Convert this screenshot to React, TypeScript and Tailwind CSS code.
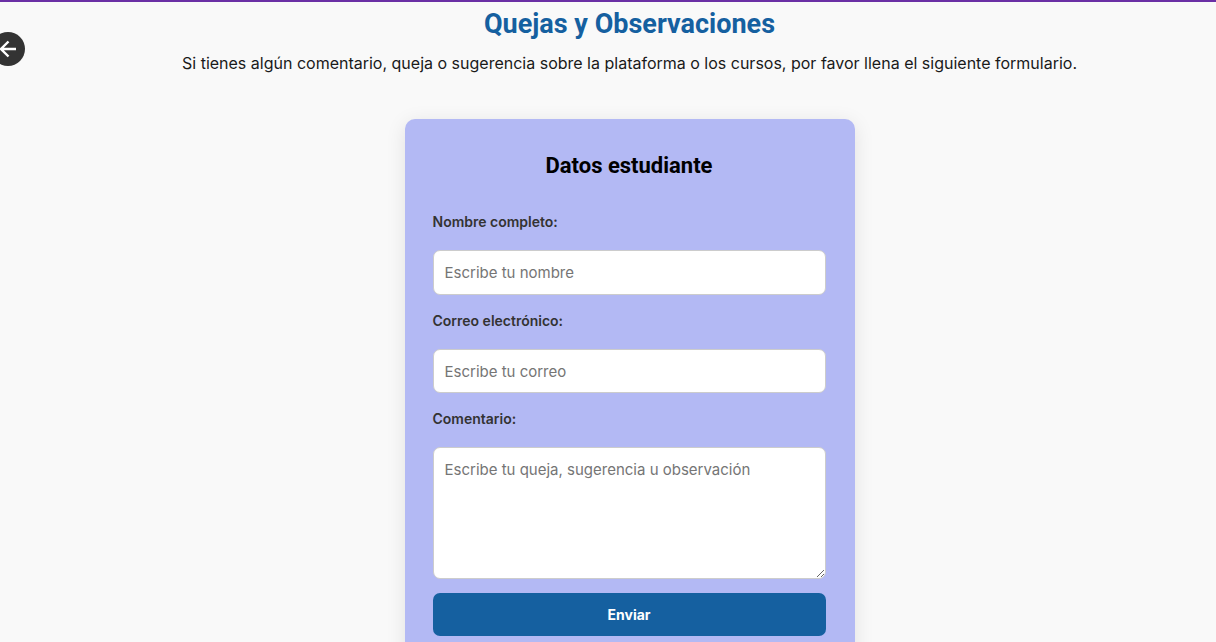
import type { ReactNode } from "react";

const fieldClass =
  "block w-full rounded-[7px] border border-[#cccccc] bg-white px-[11px] text-[15px] text-[#333333] placeholder:text-[#757575]";

function Field({ id, label, children }: { id: string; label: string; children: ReactNode }) {
  return (
    <div className="mb-[14px]">
      <label htmlFor={id} className="mb-4 block text-[14px] font-semibold leading-6 text-[#333333]">
        {label}
      </label>
      {children}
    </div>
  );
}

export default function App() {
  return (
    <div className="relative min-h-screen overflow-hidden border-t-2 border-[#6a2fa5] bg-[#f9f9f9] pl-[43px] font-['Inter',sans-serif] text-black">
      <button
        type="button"
        aria-label="Volver"
        className="absolute -left-[9px] top-[30px] flex size-[34px] items-center justify-center rounded-full bg-[#333333] text-white"
      >
        <svg viewBox="0 0 24 24" className="size-6" fill="none" stroke="currentColor" strokeWidth="2.4">
          <path d="M20 12H5M12.5 4.5L5 12l7.5 7.5" />
        </svg>
      </button>
      <header className="text-center">
        <h1 className="pt-1 font-['Roboto',sans-serif] text-[27px] font-bold leading-9 text-[#1560a0]">
          Quejas y Observaciones
        </h1>
        <p className="mt-[9px] text-[16px] leading-6 text-[#1a1a1a]">
          Si tienes algún comentario, queja o sugerencia sobre la plataforma o los cursos, por favor llena el siguiente formulario.
        </p>
      </header>
      <form className="mx-auto mt-11 w-full max-w-[450px] rounded-[10px] bg-[#b3b9f4] pb-7 pl-7 pr-[29px] pt-[29px] shadow-[0_4px_20px_rgba(0,0,0,0.1)]">
        <h2 className="mb-[26px] text-center font-['Roboto',sans-serif] text-[22px] font-bold leading-9">
          Datos estudiante
        </h2>
        <Field id="nombre" label="Nombre completo:">
          <input id="nombre" type="text" placeholder="Escribe tu nombre" className={`${fieldClass} h-[45px]`} />
        </Field>
        <Field id="correo" label="Correo electrónico:">
          <input id="correo" type="email" placeholder="Escribe tu correo" className={`${fieldClass} h-11`} />
        </Field>
        <Field id="comentario" label="Comentario:">
          <textarea
            id="comentario"
            placeholder="Escribe tu queja, sugerencia u observación"
            className={`${fieldClass} h-[132px] resize-y py-[11px]`}
          />
        </Field>
        <button type="submit" className="h-[43px] w-full rounded-[7px] bg-[#1560a0] text-[14px] font-bold text-white">
          Enviar
        </button>
      </form>
    </div>
  );
}
